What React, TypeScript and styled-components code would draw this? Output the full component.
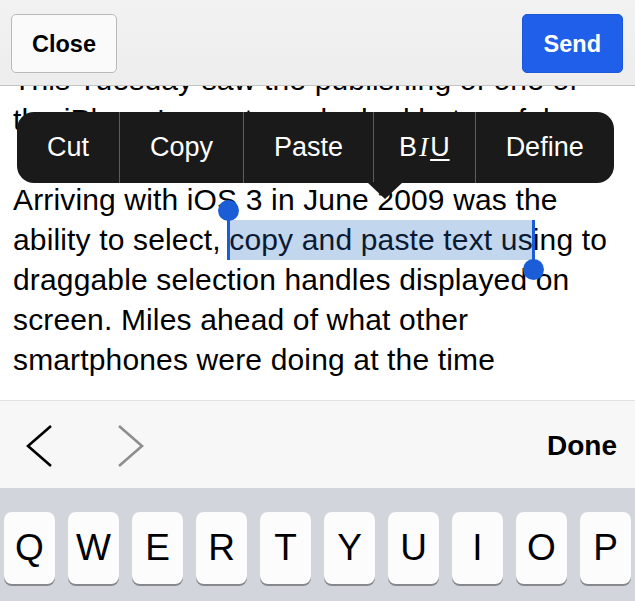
import styled, { createGlobalStyle } from "styled-components";

const GlobalStyle = createGlobalStyle`
    html, body {
        margin: 0;
        padding: 0;
        background: #ffffff;
    }
    body {
        font-family: "Liberation Sans", Arial, sans-serif;
        color: #000;
    }
`;

const Screen = styled.div`
    width: 635px;
    height: 601px;
    overflow: hidden;
    display: flex;
    flex-direction: column;
    background: #fff;
`;

const Header = styled.header`
    height: 86px;
    box-sizing: border-box;
    flex-shrink: 0;
    display: flex;
    align-items: center;
    justify-content: space-between;
    padding: 1px 12px 0 11px;
    background: linear-gradient(#f2f2f2, #ededed);
    border-bottom: 1px solid #c4c4c4;
    position: relative;
    z-index: 2;
`;

const HeaderButton = styled.button<{ $primary?: boolean }>`
    height: 59px;
    padding: 3px ${(p) => (p.$primary ? "21px" : "20px")} 0;
    min-width: ${(p) => (p.$primary ? "100px" : "105px")};
    border-radius: 5px;
    border: 1px solid ${(p) => (p.$primary ? "#1b57d8" : "#b9b9b9")};
    background: ${(p) => (p.$primary ? "#1f5fea" : "#fafafa")};
    color: ${(p) => (p.$primary ? "#fff" : "#000")};
    font-family: "Liberation Sans", Arial, sans-serif;
    font-weight: 700;
    font-size: 23.5px;
    cursor: pointer;
`;

const Editor = styled.div`
    position: relative;
    height: 314px;
    flex-shrink: 0;
    overflow: hidden;
`;

const TextBody = styled.div`
    margin-top: -26px;
    padding-left: 13px;
    font-size: 30px;
    letter-spacing: 0.15px;
    line-height: 40px;
    color: #000;
`;

const Line = styled.div`
    white-space: nowrap;
    height: 40px;
`;

const Selection = styled.span`
    position: relative;
    display: inline-block;
    height: 40px;
    vertical-align: top;
    background: #c2d6ee;
    color: #0a1a33;
`;

const Handle = styled.span<{ $end?: boolean }>`
    position: absolute;
    width: 3px;
    height: 50px;
    background: #1b5dd6;
    ${(p) => (p.$end ? "right: -2px; top: 0;" : "left: -2px; top: -10px;")}

    &::after {
        content: "";
        position: absolute;
        left: -9px;
        ${(p) => (p.$end ? "bottom: -10px;" : "top: -10px;")}
        width: 21px;
        height: 21px;
        border-radius: 50%;
        background: #1b5dd6;
    }
`;

const Menu = styled.div`
    position: absolute;
    left: 17px;
    top: 26px;
    height: 71px;
    display: flex;
    background: #1a1a1a;
    border-radius: 17px;
    color: #fff;
    font-size: 27px;
    z-index: 3;

    &::after {
        content: "";
        position: absolute;
        left: 350px;
        top: 70px;
        border-left: 18px solid transparent;
        border-right: 18px solid transparent;
        border-top: 17px solid #1a1a1a;
    }
`;

const MenuItem = styled.div<{ $first?: boolean; $pad?: number }>`
    display: flex;
    align-items: center;
    padding: 0 ${(p) => p.$pad ?? 30}px;
    border-left: ${(p) => (p.$first ? "none" : "1px solid #5c5c5c")};
`;

const StyleGlyph = styled.span<{ $kind: "b" | "i" | "u" }>`
    display: inline-block;
    margin: 0 1px;
    font-family: ${(p) => (p.$kind === "i" ? '"Liberation Serif", serif' : '"Liberation Sans", Arial, sans-serif')};
    font-style: ${(p) => (p.$kind === "i" ? "italic" : "normal")};
    text-decoration: ${(p) => (p.$kind === "u" ? "underline" : "none")};
    text-underline-offset: 3px;
`;

const AccessoryBar = styled.div`
    height: 88px;
    box-sizing: border-box;
    flex-shrink: 0;
    display: flex;
    align-items: center;
    background: #f7f7f7;
    border-top: 1px solid #e2e2e2;
    padding: 2px 18px 0 26px;
`;

const Arrows = styled.div`
    display: flex;
    gap: 64px;
    flex: 1;
`;

const DoneButton = styled.span`
    font-weight: 700;
    font-size: 28px;
`;

const Keyboard = styled.div`
    flex: 1;
    background: #d2d5db;
    padding: 24px 4px 0 4px;
    display: flex;
    gap: 13px;
`;

const Key = styled.div`
    width: 51px;
    height: 72px;
    flex-shrink: 0;
    display: flex;
    align-items: center;
    justify-content: center;
    background: #fcfcfc;
    border-radius: 8px;
    box-shadow: 0 2px 0 #88898c;
    font-size: 37px;
    color: #000;
`;

const Chevron = ({ dir, color }: { dir: "left" | "right"; color: string }) => (
    <svg width="27" height="44" viewBox="0 0 27 44">
        <polyline
            points={dir === "left" ? "25,2 2,22 25,42" : "2,2 25,22 2,42"}
            fill="none"
            stroke={color}
            strokeWidth="2.6"
        />
    </svg>
);

const keys = ["Q", "W", "E", "R", "T", "Y", "U", "I", "O", "P"];

const App = () => {
    return (
        <Screen>
            <GlobalStyle />
            <Header>
                <HeaderButton>Close</HeaderButton>
                <HeaderButton $primary>Send</HeaderButton>
            </Header>

            <Editor>
                <TextBody>
                    <Line>This Tuesday saw the publishing of one of</Line>
                    <Line>the iPhone's most overlooked but useful</Line>
                    <Line />
                    <Line>Arriving with iOS 3 in June 2009 was the</Line>
                    <Line>
                        ability to select,{" "}
                        <Selection>
                            <Handle />
                            copy and paste text us
                            <Handle $end />
                        </Selection>
                        ing to
                    </Line>
                    <Line>draggable selection handles displayed on</Line>
                    <Line>screen. Miles ahead of what other</Line>
                    <Line>smartphones were doing at the time</Line>
                </TextBody>

                <Menu>
                    <MenuItem $first>Cut</MenuItem>
                    <MenuItem>Copy</MenuItem>
                    <MenuItem>Paste</MenuItem>
                    <MenuItem $pad={24}>
                        <StyleGlyph $kind="b">B</StyleGlyph>
                        <StyleGlyph $kind="i">I</StyleGlyph>
                        <StyleGlyph $kind="u">U</StyleGlyph>
                    </MenuItem>
                    <MenuItem>Define</MenuItem>
                </Menu>
            </Editor>

            <AccessoryBar>
                <Arrows>
                    <Chevron dir="left" color="#000" />
                    <Chevron dir="right" color="#8e8e8e" />
                </Arrows>
                <DoneButton>Done</DoneButton>
            </AccessoryBar>

            <Keyboard>
                {keys.map((k) => (
                    <Key key={k}>{k}</Key>
                ))}
            </Keyboard>
        </Screen>
    );
};

export default App;
